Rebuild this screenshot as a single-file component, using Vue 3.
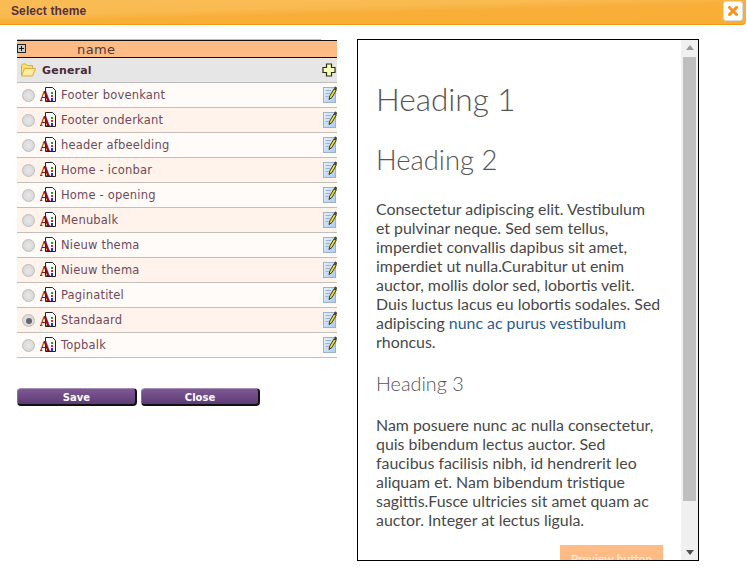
<script setup>
const rows = [
  { name: 'Footer bovenkant' },
  { name: 'Footer onderkant' },
  { name: 'header afbeelding' },
  { name: 'Home - iconbar' },
  { name: 'Home - opening' },
  { name: 'Menubalk' },
  { name: 'Nieuw thema' },
  { name: 'Nieuw thema' },
  { name: 'Paginatitel' },
  { name: 'Standaard', checked: true },
  { name: 'Topbalk' },
]
</script>

<template>
  <div class="page">
    <header class="titlebar">
      <span class="title">Select theme</span>
      <button class="close" aria-label="Close">
        <svg width="10" height="10" viewBox="0 0 10 10">
          <path d="M1.5 1.5 L8.5 8.5 M8.5 1.5 L1.5 8.5" stroke="#F7931E" stroke-width="3" stroke-linecap="square" />
        </svg>
      </button>
    </header>

    <main class="main">
      <section class="left">
        <div class="table">
          <div class="thead">
            <span class="plusbox"></span>
            <span class="thname">name</span>
          </div>
          <div class="group">
            <svg class="folder" width="15" height="14" viewBox="0 0 15 14">
              <path d="M0.5 12.5 V2.5 L1.5 1 H5 L6.5 2.5 H11.5 V5" fill="#FBE07A" stroke="#D9AE3A" />
              <path d="M0.5 13 L3.5 5.5 H14.5 L11.5 13 Z" fill="#FDEBA0" stroke="#D9AE3A" />
            </svg>
            <span class="groupname">General</span>
            <svg class="addicon" width="14" height="14" viewBox="0 0 14 14">
              <path d="M4.5 1 H9.5 V4.5 H13 V9.5 H9.5 V13 H4.5 V9.5 H1 V4.5 H4.5 Z" fill="#F6FFB8" stroke="#2E2E14" stroke-width="1.2" />
            </svg>
          </div>
          <div v-for="(r, i) in rows" :key="i" class="row" :class="{ alt: i % 2 === 1 }">
            <span class="radio" :class="{ on: r.checked }"></span>
            <svg class="fonticon" width="16" height="16" viewBox="0 0 16 16">
              <path d="M5.5 0.5 H12.5 L15.5 3.5 V14.5 H5.5 Z" fill="#fff" stroke="#222" />
              <rect x="11" y="5" width="2" height="2" fill="#1DA01D" />
              <rect x="11" y="8" width="2" height="2" fill="#E02020" />
              <rect x="11" y="11" width="2" height="3" fill="#2030E0" />
              <text x="-0.5" y="14" class="icona">A</text>
            </svg>
            <span class="rowname">{{ r.name }}</span>
            <svg class="editicon" width="14" height="17" viewBox="0 0 14 17">
              <defs>
                <linearGradient id="docfill" x1="0" y1="0" x2="1" y2="1">
                  <stop offset="0" stop-color="#EAF2FB" />
                  <stop offset="1" stop-color="#A8CBEE" />
                </linearGradient>
              </defs>
              <rect x="0.5" y="1.5" width="12" height="15" fill="url(#docfill)" stroke="#9DB1CC" />
              <path d="M2.5 4.5 H8 M2.5 7.5 H7 M2.5 10.5 H5.5" stroke="#9DB1CC" />
              <path d="M6 13.5 L6.8 10 L11 3 L13.2 4.2 L9 11.5 Z" fill="#F4E31A" stroke="#222" stroke-width="0.9" />
              <path d="M11.2 2.6 L12.2 0.8 L14 2 L13.2 3.8 Z" fill="#1F6B1F" stroke="#222" stroke-width="0.5" />
            </svg>
          </div>
        </div>
        <div class="actions">
          <button class="btn save">Save</button>
          <button class="btn">Close</button>
        </div>
      </section>

      <section class="preview">
        <div class="content">
          <h1>Heading 1</h1>
          <h2>Heading 2</h2>
          <p class="first">Consectetur adipiscing elit. Vestibulum et pulvinar neque. Sed sem tellus, imperdiet convallis dapibus sit amet, imperdiet ut nulla.Curabitur ut enim auctor, mollis dolor sed, lobortis velit. Duis luctus lacus eu lobortis sodales. Sed adipiscing <a>nunc ac purus vestibulum</a> rhoncus.</p>
          <h3>Heading 3</h3>
          <p>Nam posuere nunc ac nulla consectetur, quis bibendum lectus auctor. Sed faucibus facilisis nibh, id hendrerit leo aliquam et. Nam bibendum tristique sagittis.Fusce ultricies sit amet quam ac auctor. Integer at lectus ligula.</p>
          <div class="prevbtnwrap"><span class="prevbtn">Preview button</span></div>
        </div>
        <div class="scrollbar">
          <span class="arrow up"></span>
          <span class="track"><span class="thumb"></span></span>
          <span class="arrow down"></span>
        </div>
      </section>
    </main>
  </div>
</template>

<style>
html, body { margin: 0; background: #fff; overflow: hidden; }
</style>

<style scoped>
.page { width: 747px; height: 570px; overflow: hidden; background: #fff; }
.titlebar {
  height: 24px; width: 746px;
  display: flex; align-items: center; justify-content: space-between;
  background: linear-gradient(178.5deg, #F9BC55 0%, #F9BA50 36%, #F8AE38 52%, #F8AE36 100%);
  border-bottom: 1px solid #EF9A10; border-bottom-right-radius: 4px;
}
.title { margin-left: 11px; margin-top: -3px; font: bold 12px "Liberation Sans", sans-serif; color: #553041; letter-spacing: .1px; }
.close {
  width: 20px; height: 20px; margin: -2px 3px 0 0; padding: 0; border: 1px solid #ddd; border-radius: 3px;
  background: #fff; display: flex; align-items: center; justify-content: center; box-sizing: border-box;
}
.main { display: flex; align-items: flex-start; padding: 14px 0 0 17px; }
.left { width: 320px; }
.table { margin-top: 1px; position: relative; }
.table::before {
  content: ""; position: absolute; left: 0; top: -1px; width: 304px; height: 1px; background: #BDBDBD;
}
.thead {
  height: 16px; background: #FFBB85; border-top: 1px solid #111; border-bottom: 1px solid #111;
  display: flex; align-items: center; position: relative;
}
.plusbox {
  position: absolute; left: 0; top: 3px; width: 7px; height: 7px; border: 1px solid #222; background: #ccc;
  background-image: linear-gradient(#111,#111), linear-gradient(#111,#111);
  background-size: 5px 1px, 1px 5px; background-position: center; background-repeat: no-repeat;
}
.thname { margin-left: 60px; font: 13px "DejaVu Sans", sans-serif; color: #4a3a3a; letter-spacing: 0.4px; }
.group {
  height: 24px; background: #E6E6E6; border-bottom: 1px solid #BDBDBD;
  display: flex; align-items: center;
}
.folder { margin-left: 4px; }
.groupname { margin-left: 6px; font: bold 11px "DejaVu Sans", sans-serif; color: #4B2A3A; flex: 1; letter-spacing: .2px; }
.addicon { margin-right: 1px; margin-top: -1px; }
.row {
  height: 24px; background: #FFFBF8; border-bottom: 1px solid #C4BEBA;
  display: flex; align-items: center;
}
.row.alt { background: #FFF3EB; }
.radio {
  width: 11px; height: 11px; margin-left: 5px; border-radius: 50%; border: 1px solid #BDBDBD;
  background: radial-gradient(#E8E8E8, #D2D2D2); position: relative; margin-top: 1px;
}
.radio.on::after {
  content: ""; position: absolute; left: 2.5px; top: 2.5px; width: 6px; height: 6px; border-radius: 50%; background: #666;
}
.fonticon { margin-left: 5px; }
.icona { font: bold 15px "Liberation Serif", serif; fill: #8A0F0F; }
.rowname { margin-left: 5px; flex: 1; font: 11.5px "DejaVu Sans", sans-serif; color: #704A5A; letter-spacing: .2px; margin-top: -1px; }
.editicon { margin-right: 0; margin-top: -2px; }
.actions { display: flex; gap: 4px; margin-top: 30px; }
.btn {
  width: 119px; height: 18px; padding: 1px 0 0; border: none; border-radius: 4px;
  border-right: 2px solid #111; border-bottom: 2px solid #111; border-top: 1px solid #A78DB5; border-left: 1px solid #8A6D9A;
  background: linear-gradient(#7D5A92, #5E3A78);
  color: #fff; font: bold 10px "DejaVu Sans", sans-serif;
  box-sizing: border-box;
}
.btn.save { width: 120px; }
.preview {
  width: 340px; height: 520px; margin-left: 20px; border: 1px solid #000; margin-top: 0;
  display: flex; overflow: hidden; background: #fff;
}
.content {
  width: 323px; box-sizing: border-box; padding: 0 18px; font-family: Lato, sans-serif; color: #444;
  height: 520px; overflow: hidden; flex: none; font-variant-ligatures: none;
}
h1 { margin: 39px 0 0; font: 300 31.5px/40px Lato, sans-serif; color: #555; }
h2 { margin: 25px 0 0; font: 300 27.4px/32px Lato, sans-serif; color: #555; }
h3 { margin: 20px 0 0; font: 300 19.8px/24px Lato, sans-serif; color: #555; }
p { margin: 20px 0 0; font: 400 15.9px/19px Lato, sans-serif; color: #484848; }
p.first { margin-top: 23px; }
a { color: #2A5C8A; }
.prevbtnwrap { display: flex; justify-content: flex-end; margin-top: 16px; }
.prevbtn { width: 103px; height: 34px; background: #FFBB85; color: #FFE4CE; text-align: center; font: 700 12px/27px Lato, sans-serif; }
.scrollbar { width: 17px; flex: none; background: #F0F0F0; display: flex; flex-direction: column; align-items: center; }
.arrow { width: 0; height: 0; border-left: 4px solid transparent; border-right: 4px solid transparent; flex: none; }
.arrow.up { border-bottom: 5px solid #999; margin: 5px 0 7px; }
.arrow.down { border-top: 5px solid #505050; margin: 6px 0 5px; }
.track { flex: 1; width: 100%; display: block; }
.thumb { display: block; margin: 0 auto; width: 13px; height: 444px; background: #BFBFBF; }
</style>
